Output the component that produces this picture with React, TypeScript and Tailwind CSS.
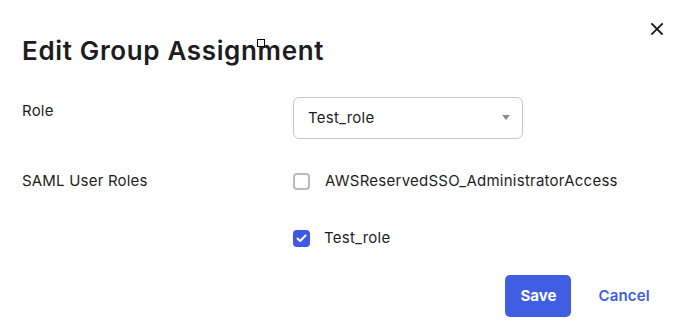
import React from "react";

export default function App() {
  return (
    <div
      className="relative w-[681px] h-[335px] bg-white text-[#1d1d21] overflow-hidden"
      style={{ fontFamily: "Inter, 'Noto Sans', sans-serif" }}
    >
      <button className="absolute right-[17px] top-[22px] w-[14px] h-[14px] flex items-center justify-center">
        <svg width="14" height="14" viewBox="0 0 14 14" fill="none">
          <path d="M2 2 L12 12 M12 2 L2 12" stroke="#1d1d21" strokeWidth="1.8" strokeLinecap="square" />
        </svg>
      </button>

      <div className="pl-[22px] pr-[31px] pt-[35px]">
        <h1 className="text-[26px] leading-[32px] font-semibold tracking-[0.65px]">
          Edit Group Assignment
        </h1>

        <div className="mt-[30px] grid grid-cols-[271px_1fr] items-start">
          <div className="pt-[4px] text-[15px] leading-[20px] tracking-[0.2px]">Role</div>
          <div className="w-[230px] h-[42px] border border-[#c6c6cc] rounded-[6px] flex items-center justify-between pl-[14px] pr-[12px]">
            <span className="text-[15px] tracking-[0.25px]">Test_role</span>
            <svg width="8" height="6" viewBox="0 0 8 6">
              <path d="M0 0 L8 0 L4 5 Z" fill="#8a8a92" />
            </svg>
          </div>
        </div>

        <div className="mt-[31px] grid grid-cols-[271px_1fr] items-start">
          <div className="text-[15px] leading-[22px] tracking-[0.2px]">SAML User Roles</div>
          <div className="flex flex-col gap-[35px]">
            <label className="flex items-center h-[22px] gap-[15px]">
              <span className="w-[17px] h-[17px] rounded-[4px] border-2 border-[#b8b8c0] bg-white" />
              <span className="text-[15px] tracking-[0.25px]">AWSReservedSSO_AdministratorAccess</span>
            </label>
            <label className="flex items-center h-[22px] gap-[14px]">
              <span className="w-[17px] h-[17px] rounded-[4px] bg-[#3f59e4] flex items-center justify-center">
                <svg width="11" height="9" viewBox="0 0 11 9" fill="none">
                  <path d="M1.5 4.5 L4.2 7 L9.5 1.5" stroke="white" strokeWidth="2" strokeLinecap="round" strokeLinejoin="round" />
                </svg>
              </span>
              <span className="text-[15px] tracking-[0.25px]">Test_role</span>
            </label>
          </div>
        </div>

        <div className="mt-[26px] flex justify-end items-center gap-[13px]">
          <button className="w-[66px] h-[42px] rounded-[5px] bg-[#3f5ee2] text-white text-[15px] font-bold">
            Save
          </button>
          <button className="h-[42px] px-[14px] -mr-[14px] text-[#3f5ee2] text-[15px] font-semibold tracking-[0.2px]">
            Cancel
          </button>
        </div>
      </div>

      <div className="absolute left-[257px] top-[39px] w-[8px] h-[8px] border border-black bg-white" />
    </div>
  );
}
